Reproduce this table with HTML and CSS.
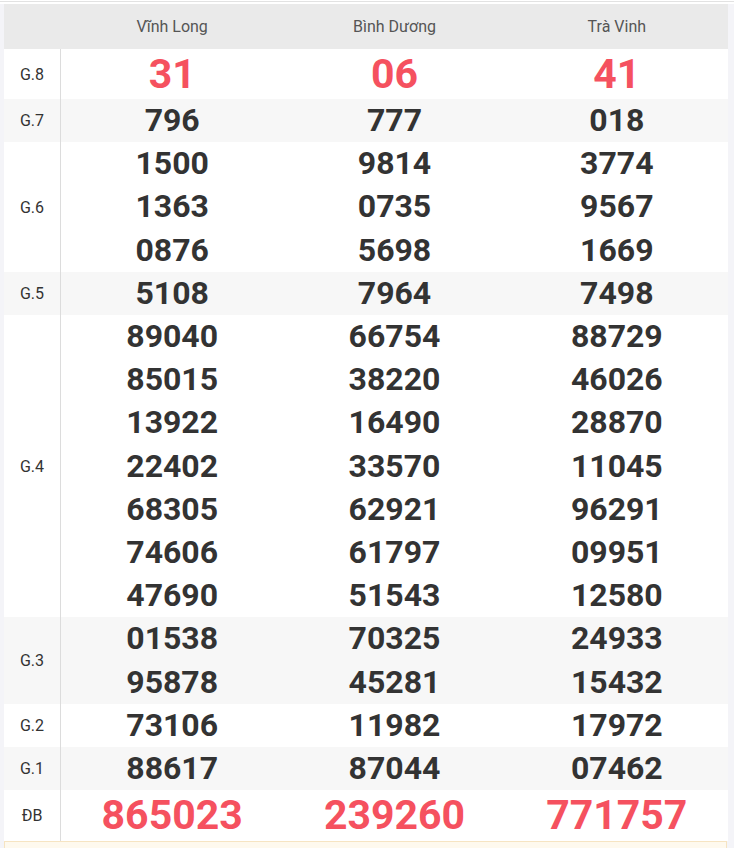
FILE: index.html
```html
<!DOCTYPE html>
<html lang="vi">
<head>
<meta charset="utf-8">
<title>Kết quả xổ số</title>
<link rel="stylesheet" href="styles.css">
</head>
<body>
<div class="topbar"></div>
<div class="wrap">
  <div class="results">
    <div class="row head">
      <div class="label"></div>
      <div class="prov">Vĩnh Long</div>
      <div class="prov">Bình Dương</div>
      <div class="prov">Trà Vinh</div>
    </div>
    <div class="row">
      <div class="label">G.8</div>
      <div class="cell red"><span>31</span></div>
      <div class="cell red"><span>06</span></div>
      <div class="cell red"><span>41</span></div>
    </div>
    <div class="row alt">
      <div class="label">G.7</div>
      <div class="cell"><span>796</span></div>
      <div class="cell"><span>777</span></div>
      <div class="cell"><span>018</span></div>
    </div>
    <div class="row">
      <div class="label">G.6</div>
      <div class="cell"><span>1500</span><span>1363</span><span>0876</span></div>
      <div class="cell"><span>9814</span><span>0735</span><span>5698</span></div>
      <div class="cell"><span>3774</span><span>9567</span><span>1669</span></div>
    </div>
    <div class="row alt">
      <div class="label">G.5</div>
      <div class="cell"><span>5108</span></div>
      <div class="cell"><span>7964</span></div>
      <div class="cell"><span>7498</span></div>
    </div>
    <div class="row">
      <div class="label">G.4</div>
      <div class="cell"><span>89040</span><span>85015</span><span>13922</span><span>22402</span><span>68305</span><span>74606</span><span>47690</span></div>
      <div class="cell"><span>66754</span><span>38220</span><span>16490</span><span>33570</span><span>62921</span><span>61797</span><span>51543</span></div>
      <div class="cell"><span>88729</span><span>46026</span><span>28870</span><span>11045</span><span>96291</span><span>09951</span><span>12580</span></div>
    </div>
    <div class="row alt">
      <div class="label">G.3</div>
      <div class="cell"><span>01538</span><span>95878</span></div>
      <div class="cell"><span>70325</span><span>45281</span></div>
      <div class="cell"><span>24933</span><span>15432</span></div>
    </div>
    <div class="row">
      <div class="label">G.2</div>
      <div class="cell"><span>73106</span></div>
      <div class="cell"><span>11982</span></div>
      <div class="cell"><span>17972</span></div>
    </div>
    <div class="row alt">
      <div class="label">G.1</div>
      <div class="cell"><span>88617</span></div>
      <div class="cell"><span>87044</span></div>
      <div class="cell"><span>07462</span></div>
    </div>
    <div class="row">
      <div class="label">ĐB</div>
      <div class="cell red db"><span>865023</span></div>
      <div class="cell red db"><span>239260</span></div>
      <div class="cell red db"><span>771757</span></div>
    </div>
  </div>
  <div class="note"></div>
</div>
</body>
</html>
```

FILE: styles.css
```css
html, body {
  margin: 0;
  padding: 0;
}

body {
  background: #f4f4f8;
  font-family: Roboto, "Liberation Sans", Arial, sans-serif;
  color: #333;
}

.topbar {
  height: 1px;
  background: #e2e2e2;
  border-top: 1px solid #fff;
  border-bottom: 2px solid #fff;
}

.wrap {
  width: 724px;
  margin: 0 0 0 4px;
}

.results {
  background: #fff;
}

.row {
  display: grid;
  grid-template-columns: 57px 1fr 1fr 1fr;
  background: #fff;
}

.row.alt {
  background: #f7f7f7;
}

.row.head {
  background: #eaeaea;
  height: 45px;
  align-items: center;
}

.prov {
  text-align: center;
  font-size: 16px;
  color: #555;
}

.label {
  display: flex;
  align-items: center;
  justify-content: center;
  border-right: 1px solid #dcdcdc;
  font-size: 16px;
  color: #333;
}

.head .label {
  border-right: 0;
}

.cell {
  display: flex;
  flex-direction: column;
  align-items: center;
  font-size: 32px;
  font-weight: 700;
  line-height: 43.2px;
  color: #333;
}

.cell.red {
  font-size: 41px;
  line-height: 50px;
  color: #f5515f;
}

.cell.db {
  line-height: 51px;
}

.note {
  height: 10px;
  background: #fef9ee;
  border: 1px solid #f6e4c2;
  border-bottom: 0;
  margin-right: 1px;
}
```
